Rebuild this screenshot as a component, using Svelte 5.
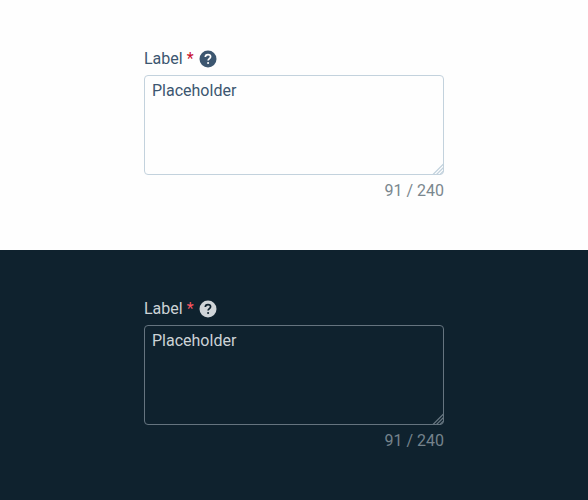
<script lang="ts">
  const themes = ['light', 'dark']
  const count = 91
  const max = 240
</script>

{#each themes as theme}
  <section class="panel panel--{theme}">
    <div class="field">
      <div class="label-row">
        <label for="textarea-{theme}">Label</label>
        <span class="required">*</span>
        <svg class="help" viewBox="0 0 20 20" aria-hidden="true">
          <circle class="help-disc" cx="10" cy="10" r="8.5" />
          <path class="help-mark" d="M7.3 8.1C7.3 6.5 8.4 5.6 10 5.6s2.6.9 2.6 2.2c0 1.7-2.5 1.9-2.5 3.8" />
          <circle class="help-dot" cx="10.1" cy="14" r="1.05" />
        </svg>
      </div>
      <div class="control">
        <textarea id="textarea-{theme}" placeholder="Placeholder"></textarea>
        <svg class="grip" viewBox="0 0 12 12" aria-hidden="true">
          <path d="M1 11.5L11.5 1M4.5 11.5l7-7M8 11.5L11.5 8" />
        </svg>
      </div>
      <div class="counter">{count} / {max}</div>
    </div>
  </section>
{/each}

<style>
  .panel {
    --text: #3c5670;
    --border: #c3d2dd;
    --required: #c8102e;
    --muted: #7a878e;
    --surface: #fefefe;
    --icon: #3c5670;
    box-sizing: border-box;
    height: 250px;
    padding-top: 48px;
    background: var(--surface);
    color: var(--text);
    font-family: Roboto, sans-serif;
    font-size: 16px;
    line-height: 21px;
  }

  .panel--dark {
    --text: #ccd3d6;
    --border: #65747f;
    --required: #fa5560;
    --muted: #75838c;
    --surface: #0f222e;
    --icon: #d0d5d8;
  }

  .field {
    width: 300px;
    margin: 0 auto;
  }

  .label-row {
    display: flex;
    align-items: center;
    height: 21px;
    margin-bottom: 6px;
  }

  .required {
    margin-left: 4px;
    color: var(--required);
  }

  .help {
    width: 20px;
    height: 20px;
    margin-left: 4px;
  }

  .help-disc {
    fill: var(--icon);
  }

  .help-mark {
    fill: none;
    stroke: var(--surface);
    stroke-width: 1.7;
  }

  .help-dot {
    fill: var(--surface);
  }

  .control {
    position: relative;
    height: 100px;
  }

  textarea {
    display: block;
    box-sizing: border-box;
    width: 100%;
    height: 100%;
    margin: 0;
    padding: 4px 7px;
    border: 1px solid var(--border);
    border-radius: 4px;
    outline: none;
    background: transparent;
    color: inherit;
    font: inherit;
    resize: none;
  }

  textarea::placeholder {
    color: var(--text);
    opacity: 1;
  }

  .grip {
    position: absolute;
    right: 0;
    bottom: 0;
    width: 12px;
    height: 12px;
    pointer-events: none;
  }

  .grip path {
    fill: none;
    stroke: var(--border);
    stroke-width: 1.2;
  }

  .counter {
    margin-top: 5px;
    color: var(--muted);
    text-align: right;
  }
</style>
